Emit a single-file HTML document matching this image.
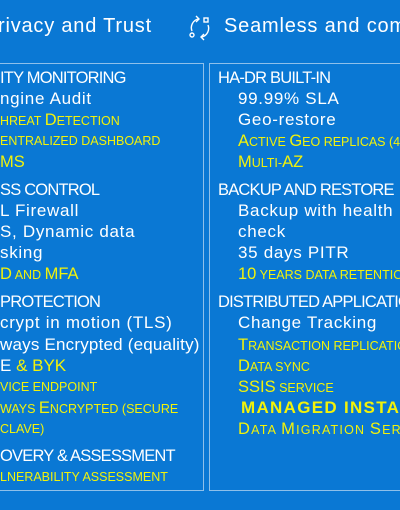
<!DOCTYPE html>
<html><head><style>
body{margin:0;width:400px;height:510px;background:#0a78d4;overflow:hidden;position:relative;font-family:"Liberation Sans",sans-serif;color:#fff}
#c{position:absolute;left:0;top:0;width:400px;height:510px;overflow:hidden}
.t{position:absolute;white-space:nowrap;line-height:20px}
.h{font-size:16.5px;letter-spacing:-0.8px}
.w{font-size:17px;letter-spacing:0.7px}
.y{font-size:12.5px;color:#f2f20a;text-transform:uppercase;letter-spacing:0}
.y b{font-weight:normal;font-size:16.5px}
.box{position:absolute;border:1px solid #8fc0ea;top:63px;height:426px}
.l{left:0}.r{left:218px}.ri{left:238px}
</style></head><body><div id="c">
<div class="t" style="left:-2px;top:16px;font-size:20px;letter-spacing:0.8px">rivacy and Trust</div>
<svg style="position:absolute;left:187px;top:13px" width="26" height="30" viewBox="0 0 26 30" fill="none" stroke="#fff" stroke-width="1.4">
<path d="M5 18 A9 9 0 0 1 11 6"/><path d="M9 3 L12 6 L9 9"/>
<path d="M21 12 A9 9 0 0 1 15 24"/><path d="M17 27 L14 24 L17 21"/>
<rect x="17" y="5" width="4" height="4"/><circle cx="5" cy="22" r="2"/></svg>
<div class="t" style="left:224px;top:16px;font-size:20px;letter-spacing:0.8px">Seamless and com</div>
<div class="box" style="left:-2px;width:204px"></div>
<div class="box" style="left:209px;width:200px"></div>

<div class="t h l" style="top:68px">ITY MONITORING</div>
<div class="t w l" style="top:89px">ngine Audit</div>
<div class="t y l" style="top:110px">hreat <b>D</b>etection</div>
<div class="t y l" style="top:131px">entralized dashboard</div>
<div class="t y l" style="top:152px"><b>MS</b></div>
<div class="t h l" style="top:180px">SS CONTROL</div>
<div class="t w l" style="top:201px">L Firewall</div>
<div class="t w l" style="top:222px">S, Dynamic data</div>
<div class="t w l" style="top:243px">sking</div>
<div class="t y l" style="top:264px"><b>D</b> and <b>MFA</b></div>
<div class="t h l" style="top:292px">PROTECTION</div>
<div class="t w l" style="top:313px">crypt in motion (TLS)</div>
<div class="t w l" style="top:335px;letter-spacing:0.2px">ways Encrypted (equality)</div>
<div class="t l" style="top:356px;font-size:17px">E <span style="color:#f2f20a">&amp; BYK</span></div>
<div class="t y l" style="top:377px">vice endpoint</div>
<div class="t y l" style="top:398px">ways <b>E</b>ncrypted (secure</div>
<div class="t y l" style="top:419px">clave)</div>
<div class="t h l" style="top:446px">OVERY &amp; ASSESSMENT</div>
<div class="t y l" style="top:467px">lnerability assessment</div>

<div class="t h r" style="top:68px">HA-DR BUILT-IN</div>
<div class="t w ri" style="top:89px">99.99% SLA</div>
<div class="t w ri" style="top:110px">Geo-restore</div>
<div class="t y ri" style="top:131px"><b>A</b>ctive <b>G</b>eo replicas (4</div>
<div class="t y ri" style="top:152px"><b>M</b>ulti-<b>AZ</b></div>
<div class="t h r" style="top:180px">BACKUP AND RESTORE</div>
<div class="t w ri" style="top:201px">Backup with health</div>
<div class="t w ri" style="top:222px">check</div>
<div class="t w ri" style="top:243px">35 days PITR</div>
<div class="t y ri" style="top:264px"><b>10</b> years data retention</div>
<div class="t h r" style="top:292px">DISTRIBUTED APPLICATION</div>
<div class="t w ri" style="top:313px">Change Tracking</div>
<div class="t y ri" style="top:335px"><b>T</b>ransaction replication</div>
<div class="t y ri" style="top:356px"><b>D</b>ata sync</div>
<div class="t y ri" style="top:377px"><b>SSIS</b> service</div>
<div class="t ri" style="top:398px;left:241px;font-size:17px;font-weight:900;color:#f2f20a;letter-spacing:1.3px">MANAGED INSTANCE</div>
<div class="t y ri" style="top:419px;letter-spacing:1.2px"><b>D</b>ata <b>M</b>igration <b>S</b>ervice</div>
</div></body></html>
